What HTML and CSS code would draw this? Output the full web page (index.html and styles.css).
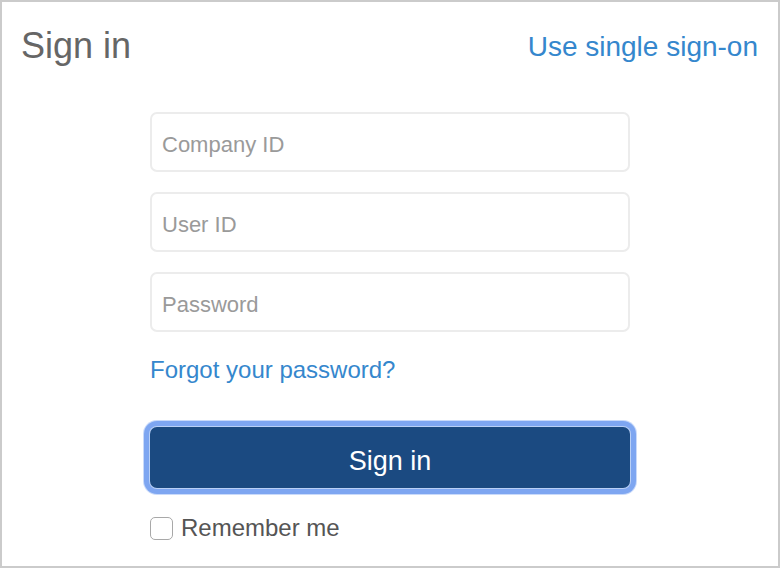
FILE: index.html
```html
<!DOCTYPE html>
<html lang="en">
<head>
<meta charset="utf-8">
<title>Sign in</title>
<link rel="stylesheet" href="styles.css">
</head>
<body>
<div class="frame">
  <header class="header">
    <h1 class="title">Sign in</h1>
    <a class="sso" href="#">Use single sign-on</a>
  </header>
  <form class="form">
    <input class="field" type="text" placeholder="Company ID">
    <input class="field" type="text" placeholder="User ID">
    <input class="field" type="password" placeholder="Password">
    <a class="forgot" href="#">Forgot your password?</a>
    <button class="submit" type="button">Sign in</button>
    <label class="remember"><span class="box"></span><span>Remember me</span></label>
  </form>
</div>
</body>
</html>
```
FILE: styles.css
```css
* { box-sizing: border-box; }
html, body { margin: 0; padding: 0; background: #fff; }
body { font-family: "Liberation Sans", Arial, sans-serif; }
.frame {
  width: 780px;
  height: 568px;
  border: 2px solid #cbcbcb;
  padding: 20px 20px 0 19px;
  overflow: hidden;
}
.header {
  display: flex;
  justify-content: space-between;
  align-items: flex-start;
  height: 44px;
}
.title {
  margin: 2px 0 0 0;
  font-size: 36px;
  line-height: 44px;
  font-weight: normal;
  color: #666;
}
.sso {
  margin-top: 3px;
  font-size: 28px;
  line-height: 44px;
  color: #3587cd;
  text-decoration: none;
}
.form {
  width: 480px;
  margin: 46px 0 0 129px;
  display: flex;
  flex-direction: column;
}
.field {
  width: 480px;
  height: 60px;
  border: 2px solid #ececec;
  border-radius: 7px;
  padding: 6px 10px 0 10px;
  font-family: "Liberation Sans", Arial, sans-serif;
  font-size: 22px;
  color: #333;
  outline: none;
  margin: 0 0 20px 0;
}
.field::placeholder { color: #9a9a9a; }
.forgot {
  margin-top: 4px;
  font-size: 24px;
  line-height: 28px;
  color: #3587cd;
  text-decoration: none;
  align-self: flex-start;
}
.submit {
  margin-top: 43px;
  height: 61px;
  width: 480px;
  border: none;
  border-radius: 7px;
  background: #1b4a81;
  color: #fff;
  font-family: "Liberation Sans", Arial, sans-serif;
  font-size: 27px;
  padding: 7px 0 0 0;
  box-shadow: 0 0 0 1px #b9d0f6, 0 0 0 6px #7ea6f1, 0 0 0 7px #c9dafa;
}
.remember {
  margin-top: 28px;
  display: flex;
  align-items: center;
  gap: 8px;
  font-size: 24px;
  line-height: 24px;
  color: #555;
}
.box {
  width: 23px;
  height: 23px;
  border: 1.5px solid #a8a8a8;
  border-radius: 5px;
  background: #fff;
}
```
